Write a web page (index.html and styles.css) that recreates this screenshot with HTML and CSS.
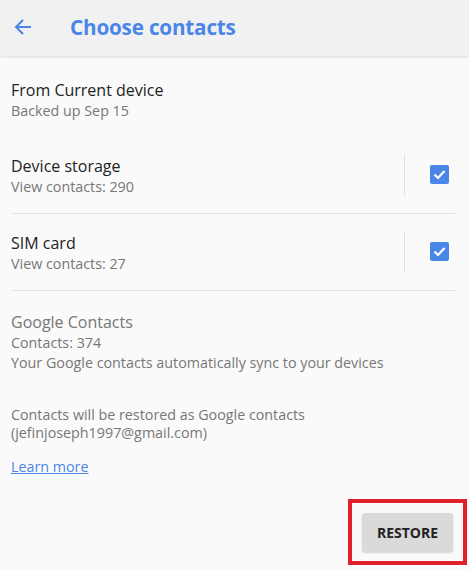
FILE: index.html
```html
<!DOCTYPE html>
<html lang="en">
<head>
    <meta charset="UTF-8">
    <meta name="viewport" content="width=device-width, initial-scale=1.0">
    <title>Choose contacts</title>
    <link rel="stylesheet" href="styles.css">
</head>
<body>

    <!-- Horní lišta -->
    <div class="toolbar">
        <svg class="back" width="20" height="20" viewBox="0 0 20 20">
            <path d="M18 10H3M10 3L3 10L10 17" fill="none" stroke="#4a86e8" stroke-width="2"/>
        </svg>
        <h1>Choose contacts</h1>
    </div>

    <div class="content">
        <div class="source">
            <div class="title">From Current device</div>
            <div class="sub">Backed up Sep 15</div>
        </div>

        <div class="row">
            <div class="info">
                <div class="title">Device storage</div>
                <div class="sub">View contacts: 290</div>
            </div>
            <div class="sep"></div>
            <div class="check">
                <svg width="19" height="19" viewBox="0 0 19 19">
                    <rect width="19" height="19" rx="2" fill="#4a86e8"/>
                    <path d="M4.5 9.5L8 13L14.5 6" fill="none" stroke="#fff" stroke-width="2.2"/>
                </svg>
            </div>
        </div>

        <div class="row">
            <div class="info">
                <div class="title">SIM card</div>
                <div class="sub">View contacts: 27</div>
            </div>
            <div class="sep"></div>
            <div class="check">
                <svg width="19" height="19" viewBox="0 0 19 19">
                    <rect width="19" height="19" rx="2" fill="#4a86e8"/>
                    <path d="M4.5 9.5L8 13L14.5 6" fill="none" stroke="#fff" stroke-width="2.2"/>
                </svg>
            </div>
        </div>

        <div class="google">
            <div class="title muted">Google Contacts</div>
            <div class="sub">Contacts: 374</div>
            <div class="sub">Your Google contacts automatically sync to your devices</div>
        </div>

        <p class="note">Contacts will be restored as Google contacts<br>(jefinjoseph1997@gmail.com)</p>

        <a class="learn" href="#">Learn more</a>

        <div class="actions">
            <div class="highlight">
                <button class="btn-restore">RESTORE</button>
            </div>
        </div>
    </div>

</body>
</html>
```

FILE: styles.css
```css
body {
    font-family: "Open Sans", sans-serif;
    background-color: #fafafa;
    color: #222;
    margin: 0;
    padding: 0;
    width: 469px;
    height: 570px;
    overflow: hidden;
}
.toolbar {
    height: 56px;
    background-color: #f1f1f1;
    box-shadow: 0 1px 2px rgba(0, 0, 0, 0.12);
    display: flex;
    align-items: center;
    padding-left: 13px;
}
.back {
    margin-right: 37px;
    margin-top: -2px;
}
h1 {
    margin: 0 0 2px;
    font-size: 20.7px;
    font-weight: 700;
    color: #4a86e8;
    letter-spacing: -0.2px;
}
.content {
    padding: 0 14px 0 11px;
}
.title {
    font-size: 16px;
    line-height: 22px;
    color: #222;
}
.sub {
    font-size: 14.3px;
    line-height: 20px;
    color: #777;
}
.muted {
    color: #777;
}
.source {
    padding-top: 23px;
    padding-bottom: 16px;
}
.row {
    display: flex;
    align-items: center;
    height: 76px;
    border-bottom: 1px solid #e2e2e2;
}
.info {
    flex: 1;
    padding-top: 1px;
}
.sep {
    width: 1px;
    height: 42px;
    background-color: #e2e2e2;
}
.check {
    width: 50px;
    display: flex;
    justify-content: flex-end;
    padding-right: 6px;
    box-sizing: border-box;
    margin-top: -1px;
}
.google {
    padding-top: 20px;
}
.note {
    font-size: 14.3px;
    line-height: 18px;
    color: #777;
    margin: 33px 0 0;
}
.learn {
    display: inline-block;
    margin-top: 15px;
    font-size: 14.3px;
    color: #4a86e8;
}
.actions {
    display: flex;
    justify-content: flex-end;
    margin-top: 22px;
    margin-right: -12px;
}
.highlight {
    border: 4px solid #e0202a;
    padding: 10px 10px 9px 10px;
}
button {
    border: none;
    border-radius: 3px;
    font-family: "Open Sans", sans-serif;
    font-size: 14px;
    font-weight: 700;
    cursor: pointer;
}
.btn-restore {
    width: 91px;
    height: 39px;
    background-color: #dadada;
    color: #222;
    box-shadow: 0 1px 2px rgba(0, 0, 0, 0.15);
}
```
